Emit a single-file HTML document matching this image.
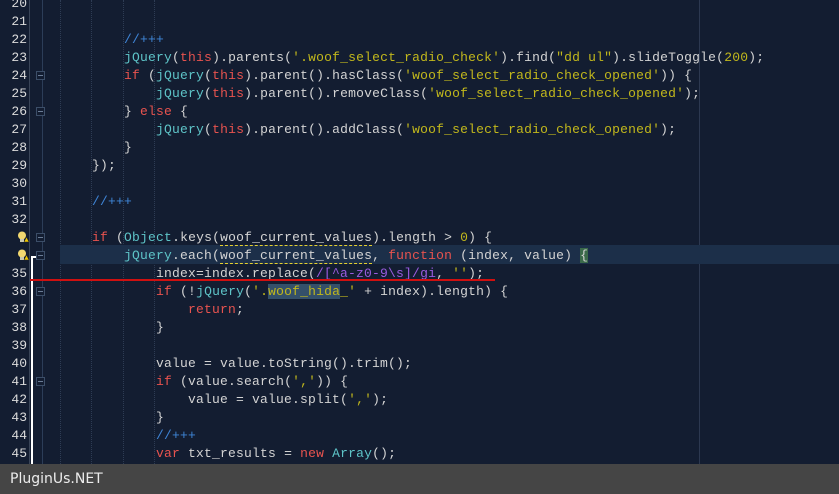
<!DOCTYPE html>
<html><head><meta charset="utf-8"><style>
html,body{margin:0;padding:0}
body{width:839px;height:494px;overflow:hidden;background:#131d31;position:relative;font-family:"Liberation Mono","DejaVu Sans Mono","Courier New",monospace;font-size:13px}
.ln{position:absolute;left:0;width:27px;text-align:right;color:#dcdcdc;height:18px;line-height:18px}
.cl{position:absolute;left:28px;height:18px;line-height:18px;white-space:pre;color:#d4d4d4;letter-spacing:0.2px}
.j{color:#5ec4c8}.t{color:#e8534f}.s{color:#c2b81c}.c{color:#3f86d8}.k{color:#e8534f}.r{color:#9a5ce0}.n{color:#c2b81c}
.u{border-bottom:1px dashed #e6d030}
.fold{position:absolute;left:36px;width:9px;height:9px;border:1px solid #3c4e68;box-sizing:border-box;background:#131d31}
.fold:after{content:"";position:absolute;left:1px;top:3px;width:5px;height:1px;background:#6a7c96}
.g{position:absolute;top:0;height:464px;width:0;border-left:1px dotted #2e3c54}
.bulb{position:absolute;left:17px;width:12px;height:12px}
</style></head><body>
<div style="position:absolute;left:29px;top:0;width:1px;height:464px;background:#3a4558"></div>
<div style="position:absolute;left:42px;top:0;width:1px;height:464px;background:#2c3d58"></div>
<div style="position:absolute;left:699px;top:0;width:1px;height:464px;background:#2c3850"></div>
<div class="g" style="left:60px"></div><div class="g" style="left:91px"></div><div class="g" style="left:123px"></div><div class="g" style="left:154px"></div>
<div style="position:absolute;left:60px;top:245px;width:779px;height:19px;background:#1c2f49"></div>
<div style="position:absolute;left:31px;top:256px;width:2px;height:208px;background:#fff"></div>
<div style="position:absolute;left:31px;top:256px;width:6px;height:2px;background:#fff"></div>

<div class="ln" style="top:-5px">20</div>
<div class="ln" style="top:13px">21</div>
<div class="ln" style="top:31px">22</div><div class="cl" style="top:31px">            <span class="c">//+++</span></div>
<div class="ln" style="top:49px">23</div><div class="cl" style="top:49px">            <span class="j">jQuery</span>(<span class="t">this</span>).parents(<span class="s">'.woof_select_radio_check'</span>).find(<span class="s">"dd ul"</span>).slideToggle(<span class="n">200</span>);</div>
<div class="ln" style="top:67px">24</div><div class="fold" style="top:71px"></div><div class="cl" style="top:67px">            <span class="k">if</span> (<span class="j">jQuery</span>(<span class="t">this</span>).parent().hasClass(<span class="s">'woof_select_radio_check_opened'</span>)) {</div>
<div class="ln" style="top:85px">25</div><div class="cl" style="top:85px">                <span class="j">jQuery</span>(<span class="t">this</span>).parent().removeClass(<span class="s">'woof_select_radio_check_opened'</span>);</div>
<div class="ln" style="top:103px">26</div><div class="fold" style="top:107px"></div><div class="cl" style="top:103px">            } <span class="k">else</span> {</div>
<div class="ln" style="top:121px">27</div><div class="cl" style="top:121px">                <span class="j">jQuery</span>(<span class="t">this</span>).parent().addClass(<span class="s">'woof_select_radio_check_opened'</span>);</div>
<div class="ln" style="top:139px">28</div><div class="cl" style="top:139px">            }</div>
<div class="ln" style="top:157px">29</div><div class="cl" style="top:157px">        });</div>
<div class="ln" style="top:175px">30</div>
<div class="ln" style="top:193px">31</div><div class="cl" style="top:193px">        <span class="c">//+++</span></div>
<div class="ln" style="top:211px">32</div>
<div class="fold" style="top:233px"></div><div class="cl" style="top:229px">        <span class="k">if</span> (<span class="j">Object</span>.keys(<span class="u">woof_current_values</span>).length &gt; <span class="n">0</span>) {</div>
<div class="fold" style="top:251px"></div><div class="cl" style="top:247px">            <span class="j">jQuery</span>.each(<span class="u">woof_current_values</span>, <span class="k">function</span> (index, value) <span style="background:#3b6a4a">{</span></div>
<div class="ln" style="top:265px">35</div><div class="cl" style="top:265px">                index=index.replace(<span class="r">/[^a-z0-9\s]/gi</span>, <span class="s">''</span>);</div>
<div style="position:absolute;left:30px;top:279px;width:465px;height:2px;background:#d01010"></div>
<div class="ln" style="top:283px">36</div><div class="fold" style="top:287px"></div><div class="cl" style="top:283px">                <span class="k">if</span> (!<span class="j">jQuery</span>(<span class="s">'.<span style="background:#34506a">woof_hida</span>_'</span> + index).length) {</div>
<div class="ln" style="top:301px">37</div><div class="cl" style="top:301px">                    <span class="k">return</span>;</div>
<div class="ln" style="top:319px">38</div><div class="cl" style="top:319px">                }</div>
<div class="ln" style="top:337px">39</div>
<div class="ln" style="top:355px">40</div><div class="cl" style="top:355px">                value = value.toString().trim();</div>
<div class="ln" style="top:373px">41</div><div class="fold" style="top:377px"></div><div class="cl" style="top:373px">                <span class="k">if</span> (value.search(<span class="s">','</span>)) {</div>
<div class="ln" style="top:391px">42</div><div class="cl" style="top:391px">                    value = value.split(<span class="s">','</span>);</div>
<div class="ln" style="top:409px">43</div><div class="cl" style="top:409px">                }</div>
<div class="ln" style="top:427px">44</div><div class="cl" style="top:427px">                <span class="c">//+++</span></div>
<div class="ln" style="top:445px">45</div><div class="cl" style="top:445px">                <span class="k">var</span> txt_results = <span class="k">new</span> <span class="j">Array</span>();</div>

<svg class="bulb" style="top:231px" viewBox="0 0 12 12"><circle cx="5" cy="4.5" r="4" fill="#f2d870"/><rect x="3" y="8" width="4" height="3" fill="#c8c8b0"/><path d="M7 11L9.5 6L12 11Z" fill="#f0c800" stroke="#222" stroke-width=".5"/></svg>
<svg class="bulb" style="top:249px" viewBox="0 0 12 12"><circle cx="5" cy="4.5" r="4" fill="#f2d870"/><rect x="3" y="8" width="4" height="3" fill="#c8c8b0"/><path d="M7 11L9.5 6L12 11Z" fill="#f0c800" stroke="#222" stroke-width=".5"/></svg>

<div style="position:absolute;left:0;top:464px;width:839px;height:30px;background:#454545;color:#ececec;font-family:'DejaVu Sans','Liberation Sans',sans-serif;font-size:14px;line-height:30px;padding-left:10px;box-sizing:border-box">PluginUs.NET</div>
</body></html>
